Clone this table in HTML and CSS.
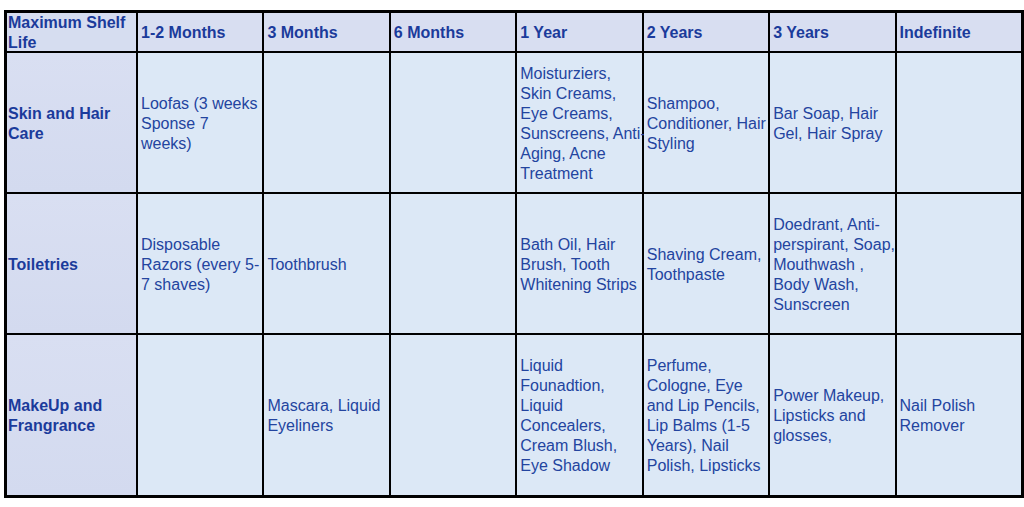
FILE: index.html
```html
<!DOCTYPE html>
<html lang="en">
<head>
<meta charset="utf-8">
<title>Maximum Shelf Life</title>
<link rel="stylesheet" href="styles.css">
</head>
<body>
<div class="shelf" role="table">
  <div class="cell head corner">Maximum Shelf<br>Life</div>
  <div class="cell head">1-2 Months</div>
  <div class="cell head">3 Months</div>
  <div class="cell head">6 Months</div>
  <div class="cell head">1 Year</div>
  <div class="cell head">2 Years</div>
  <div class="cell head">3 Years</div>
  <div class="cell head">Indefinite</div>

  <div class="cell rowhead">Skin and Hair<br>Care</div>
  <div class="cell">Loofas (3 weeks<br>Sponse 7<br>weeks)</div>
  <div class="cell"></div>
  <div class="cell"></div>
  <div class="cell">Moisturziers,<br>Skin Creams,<br>Eye Creams,<br>Sunscreens, Anti-<br>Aging, Acne<br>Treatment</div>
  <div class="cell">Shampoo,<br>Conditioner, Hair<br>Styling</div>
  <div class="cell">Bar Soap, Hair<br>Gel, Hair Spray</div>
  <div class="cell"></div>

  <div class="cell rowhead">Toiletries</div>
  <div class="cell">Disposable<br>Razors (every 5-<br>7 shaves)</div>
  <div class="cell">Toothbrush</div>
  <div class="cell"></div>
  <div class="cell">Bath Oil, Hair<br>Brush, Tooth<br>Whitening Strips</div>
  <div class="cell">Shaving Cream,<br>Toothpaste</div>
  <div class="cell">Doedrant, Anti-<br>perspirant, Soap,<br>Mouthwash ,<br>Body Wash,<br>Sunscreen</div>
  <div class="cell"></div>

  <div class="cell rowhead">MakeUp and<br>Frangrance</div>
  <div class="cell"></div>
  <div class="cell">Mascara, Liquid<br>Eyeliners</div>
  <div class="cell"></div>
  <div class="cell">Liquid<br>Founadtion,<br>Liquid<br>Concealers,<br>Cream Blush,<br>Eye Shadow</div>
  <div class="cell">Perfume,<br>Cologne, Eye<br>and Lip Pencils,<br>Lip Balms (1-5<br>Years), Nail<br>Polish, Lipsticks</div>
  <div class="cell">Power Makeup,<br>Lipsticks and<br>glosses,</div>
  <div class="cell">Nail Polish<br>Remover</div>
</div>
</body>
</html>
```

FILE: styles.css
```css
html, body {
  margin: 0;
  padding: 0;
  background: #ffffff;
}

.shelf {
  box-sizing: border-box;
  width: 1020px;
  margin: 10px 0 0 4px;
  padding: 3px;
  display: grid;
  grid-template-columns: 129px repeat(7, 1fr);
  grid-template-rows: 38px 139px 139px 160px;
  gap: 2px;
  background: #000000;
  font-family: "Liberation Sans", Arial, sans-serif;
  font-size: 16px;
  line-height: 20px;
}

.cell {
  display: flex;
  align-items: center;
  padding: 2px 2px 0 3px;
  white-space: nowrap;
  background: #dce8f6;
  color: #23449f;
  min-width: 0;
}

.head {
  background: #d8def1;
  color: #1b3b9b;
  font-weight: bold;
}

.rowhead {
  padding-left: 1px;
  background: linear-gradient(180deg, #d9dff2 0%, #d3daef 100%);
  color: #1b3b9b;
  font-weight: bold;
}

.corner {
  padding-left: 1px;
  background: #d6ddf0;
}
```
